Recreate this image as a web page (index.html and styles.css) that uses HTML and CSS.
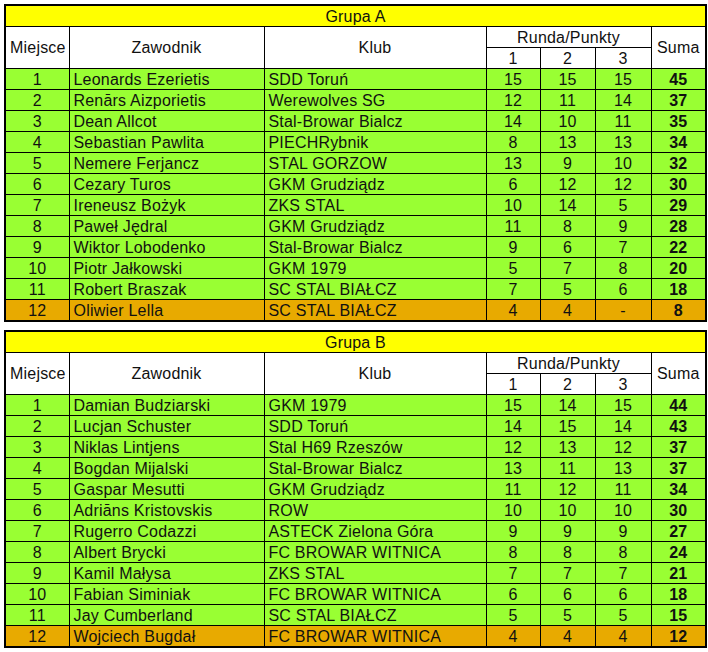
FILE: index.html
```html
<!DOCTYPE html>
<html lang="pl">
<head>
<meta charset="utf-8">
<title>Grupy</title>
<link rel="stylesheet" href="styles.css">
</head>
<body>
<div class="page">
<table class="grp">
<colgroup><col class="c-m"><col class="c-z"><col class="c-k"><col class="c-r1"><col class="c-r2"><col class="c-r3"><col class="c-s"></colgroup>
<thead>
<tr class="title"><th colspan="7">Grupa A</th></tr>
<tr class="hd"><th rowspan="2">Miejsce</th><th rowspan="2">Zawodnik</th><th rowspan="2">Klub</th><th colspan="3">Runda/Punkty</th><th rowspan="2">Suma</th></tr>
<tr class="hd"><th>1</th><th>2</th><th>3</th></tr>
</thead>
<tbody>
<tr><td class="n">1</td><td>Leonards Ezerietis</td><td>SDD Toruń</td><td class="n">15</td><td class="n">15</td><td class="n">15</td><td class="s">45</td></tr>
<tr><td class="n">2</td><td>Renārs Aizporietis</td><td>Werewolves SG</td><td class="n">12</td><td class="n">11</td><td class="n">14</td><td class="s">37</td></tr>
<tr><td class="n">3</td><td>Dean Allcot</td><td>Stal-Browar Bialcz</td><td class="n">14</td><td class="n">10</td><td class="n">11</td><td class="s">35</td></tr>
<tr><td class="n">4</td><td>Sebastian Pawlita</td><td>PIECHRybnik</td><td class="n">8</td><td class="n">13</td><td class="n">13</td><td class="s">34</td></tr>
<tr><td class="n">5</td><td>Nemere Ferjancz</td><td>STAL GORZOW</td><td class="n">13</td><td class="n">9</td><td class="n">10</td><td class="s">32</td></tr>
<tr><td class="n">6</td><td>Cezary Turos</td><td>GKM Grudziądz</td><td class="n">6</td><td class="n">12</td><td class="n">12</td><td class="s">30</td></tr>
<tr><td class="n">7</td><td>Ireneusz Bożyk</td><td>ZKS STAL</td><td class="n">10</td><td class="n">14</td><td class="n">5</td><td class="s">29</td></tr>
<tr><td class="n">8</td><td>Paweł Jędral</td><td>GKM Grudziądz</td><td class="n">11</td><td class="n">8</td><td class="n">9</td><td class="s">28</td></tr>
<tr><td class="n">9</td><td>Wiktor Lobodenko</td><td>Stal-Browar Bialcz</td><td class="n">9</td><td class="n">6</td><td class="n">7</td><td class="s">22</td></tr>
<tr><td class="n">10</td><td>Piotr Jałkowski</td><td>GKM 1979</td><td class="n">5</td><td class="n">7</td><td class="n">8</td><td class="s">20</td></tr>
<tr><td class="n">11</td><td>Robert Braszak</td><td>SC STAL BIAŁCZ</td><td class="n">7</td><td class="n">5</td><td class="n">6</td><td class="s">18</td></tr>
<tr class="last"><td class="n">12</td><td>Oliwier Lella</td><td>SC STAL BIAŁCZ</td><td class="n">4</td><td class="n">4</td><td class="n">-</td><td class="s">8</td></tr>
</tbody>
</table>

<table class="grp">
<colgroup><col class="c-m"><col class="c-z"><col class="c-k"><col class="c-r1"><col class="c-r2"><col class="c-r3"><col class="c-s"></colgroup>
<thead>
<tr class="title"><th colspan="7">Grupa B</th></tr>
<tr class="hd"><th rowspan="2">Miejsce</th><th rowspan="2">Zawodnik</th><th rowspan="2">Klub</th><th colspan="3">Runda/Punkty</th><th rowspan="2">Suma</th></tr>
<tr class="hd"><th>1</th><th>2</th><th>3</th></tr>
</thead>
<tbody>
<tr><td class="n">1</td><td>Damian Budziarski</td><td>GKM 1979</td><td class="n">15</td><td class="n">14</td><td class="n">15</td><td class="s">44</td></tr>
<tr><td class="n">2</td><td>Lucjan Schuster</td><td>SDD Toruń</td><td class="n">14</td><td class="n">15</td><td class="n">14</td><td class="s">43</td></tr>
<tr><td class="n">3</td><td>Niklas Lintjens</td><td>Stal H69 Rzeszów</td><td class="n">12</td><td class="n">13</td><td class="n">12</td><td class="s">37</td></tr>
<tr><td class="n">4</td><td>Bogdan Mijalski</td><td>Stal-Browar Bialcz</td><td class="n">13</td><td class="n">11</td><td class="n">13</td><td class="s">37</td></tr>
<tr><td class="n">5</td><td>Gaspar Mesutti</td><td>GKM Grudziądz</td><td class="n">11</td><td class="n">12</td><td class="n">11</td><td class="s">34</td></tr>
<tr><td class="n">6</td><td>Adriāns Kristovskis</td><td>ROW</td><td class="n">10</td><td class="n">10</td><td class="n">10</td><td class="s">30</td></tr>
<tr><td class="n">7</td><td>Rugerro Codazzi</td><td>ASTECK Zielona Góra</td><td class="n">9</td><td class="n">9</td><td class="n">9</td><td class="s">27</td></tr>
<tr><td class="n">8</td><td>Albert Brycki</td><td>FC BROWAR WITNICA</td><td class="n">8</td><td class="n">8</td><td class="n">8</td><td class="s">24</td></tr>
<tr><td class="n">9</td><td>Kamil Małysa</td><td>ZKS STAL</td><td class="n">7</td><td class="n">7</td><td class="n">7</td><td class="s">21</td></tr>
<tr><td class="n">10</td><td>Fabian Siminiak</td><td>FC BROWAR WITNICA</td><td class="n">6</td><td class="n">6</td><td class="n">6</td><td class="s">18</td></tr>
<tr><td class="n">11</td><td>Jay Cumberland</td><td>SC STAL BIAŁCZ</td><td class="n">5</td><td class="n">5</td><td class="n">5</td><td class="s">15</td></tr>
<tr class="last"><td class="n">12</td><td>Wojciech Bugdał</td><td>FC BROWAR WITNICA</td><td class="n">4</td><td class="n">4</td><td class="n">4</td><td class="s">12</td></tr>
</tbody>
</table>
</div>
</body>
</html>
```
FILE: styles.css
```css
html, body {
  margin: 0;
  padding: 0;
  background: #ffffff;
}
.page {
  padding: 4px 0 0 4px;
  display: flex;
  flex-direction: column;
  gap: 8px;
  font-family: "Liberation Sans", Arial, sans-serif;
  font-size: 16px;
  letter-spacing: 0.2px;
  color: #111;
}
.grp {
  border-collapse: collapse;
  table-layout: fixed;
  width: 701px;
  border: 2px solid #000;
}
.c-m { width: 64px; }
.c-z { width: 195px; }
.c-k { width: 222px; }
.c-r1 { width: 54px; }
.c-r2 { width: 55px; }
.c-r3 { width: 56px; }
.c-s { width: 55px; }
.grp th, .grp td {
  border: 1px solid #000;
  height: 19px;
  padding: 1px 4px 0;
  line-height: 18px;
  font-weight: normal;
  white-space: nowrap;
  overflow: hidden;
}
.grp th {
  background: #ffffff;
  text-align: center;
}
.grp .title th {
  background: #ffff00;
}
.grp td {
  background: #99ff33;
  text-align: left;
}
.grp td.n {
  text-align: center;
}
.grp td.s {
  text-align: center;
  font-weight: bold;
}
.grp tr.last td {
  background: #e8aa00;
}
```
